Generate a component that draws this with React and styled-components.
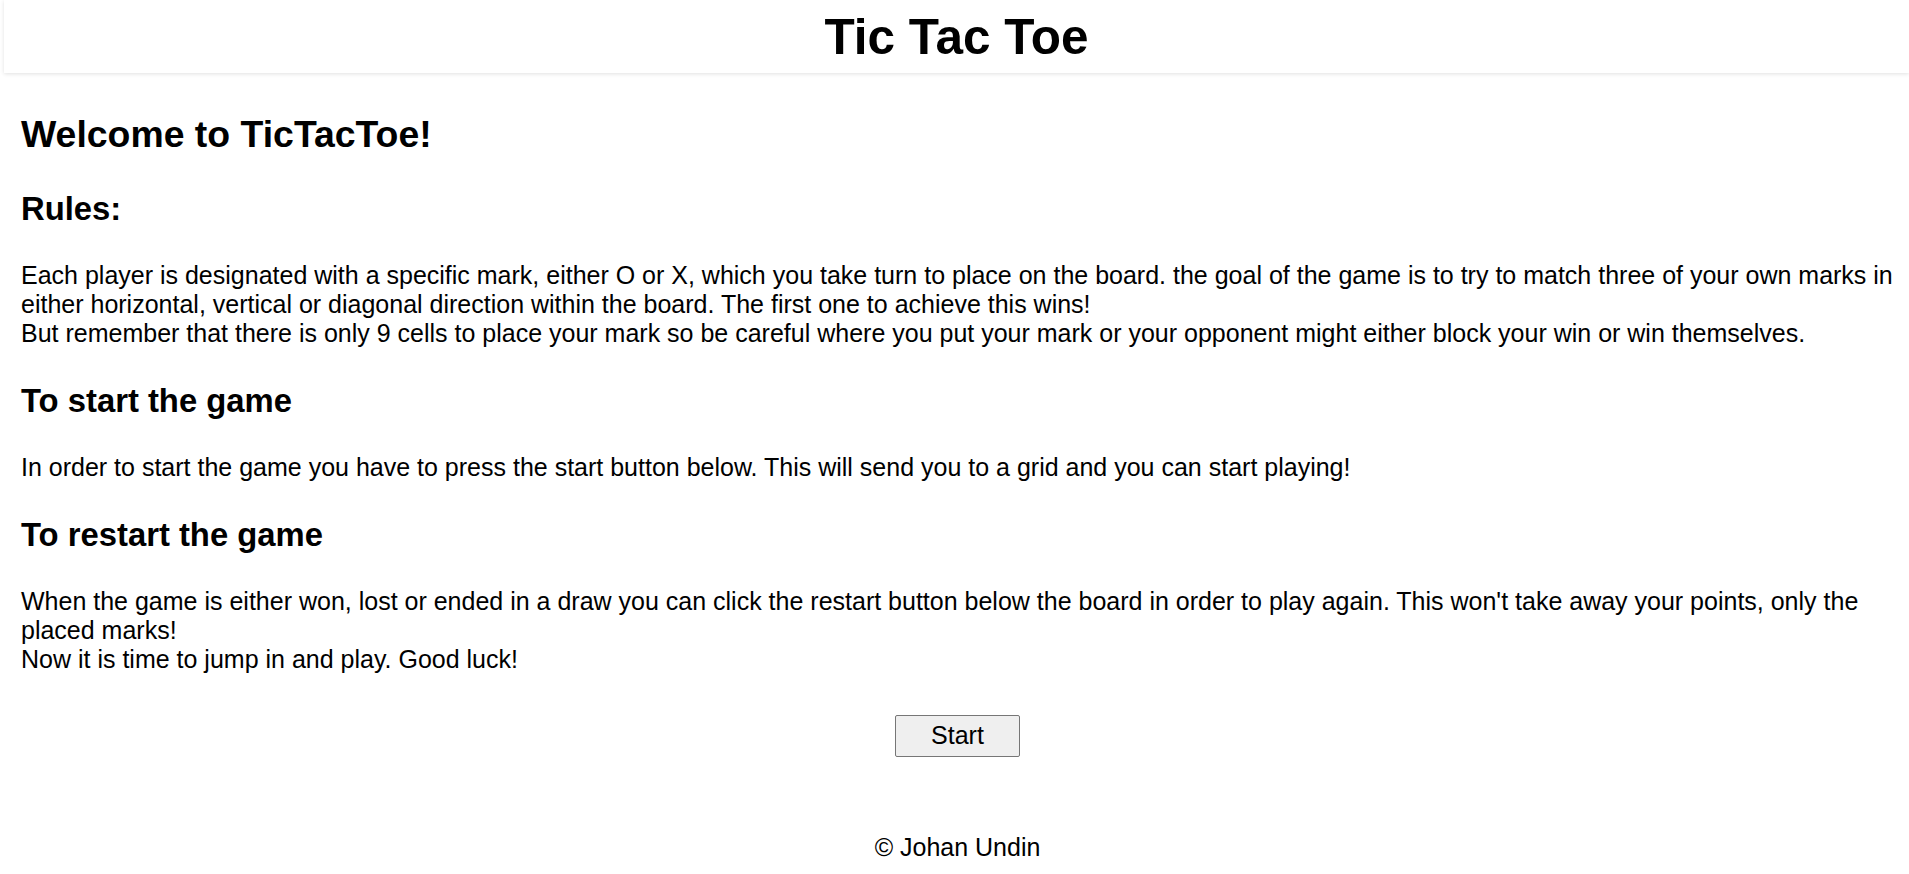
import styled, { createGlobalStyle } from 'styled-components'

const GlobalStyle = createGlobalStyle`
  html, body {
    margin: 0;
    padding: 0;
    background: #ffffff;
    color: #000000;
    font-family: "Liberation Sans", Arial, Helvetica, sans-serif;
  }
  * {
    box-sizing: border-box;
  }
`

const sections = [
  {
    title: 'Rules:',
    lines: [
      'Each player is designated with a specific mark, either O or X, which you take turn to place on the board. the goal of the game is to try to match three of your own marks in either horizontal, vertical or diagonal direction within the board. The first one to achieve this wins!',
      'But remember that there is only 9 cells to place your mark so be careful where you put your mark or your opponent might either block your win or win themselves.'
    ]
  },
  {
    title: 'To start the game',
    lines: [
      'In order to start the game you have to press the start button below. This will send you to a grid and you can start playing!'
    ]
  },
  {
    title: 'To restart the game',
    lines: [
      "When the game is either won, lost or ended in a draw you can click the restart button below the board in order to play again. This won't take away your points, only the placed marks!",
      'Now it is time to jump in and play. Good luck!'
    ]
  }
]

const App = () => {
  return (
    <Page>
      <GlobalStyle />
      <Header>
        <Title>Tic Tac Toe</Title>
      </Header>
      <Main>
        <Welcome>Welcome to TicTacToe!</Welcome>
        {sections.map(({ title, lines }) => (
          <Section key={title}>
            <SectionTitle>{title}</SectionTitle>
            <Text>
              {lines.map((line, i) => (
                <span key={i}>
                  {i > 0 && <br />}
                  {line}
                </span>
              ))}
            </Text>
          </Section>
        ))}
        <ButtonRow>
          <StartButton type="button">Start</StartButton>
        </ButtonRow>
      </Main>
      <Footer>© Johan Undin</Footer>
    </Page>
  )
}

const Page = styled.div`
  display: flex;
  flex-direction: column;
  min-height: 874px;
`

const Header = styled.header`
  height: 73px;
  margin-left: 4px;
  display: flex;
  align-items: center;
  justify-content: center;
  background: #ffffff;
  box-shadow: 0 1px 4px rgba(0, 0, 0, 0.12);
`

const Title = styled.h1`
  margin: 0;
  font-size: 49.5px;
  font-weight: 700;
`

const Main = styled.main`
  display: flex;
  flex-direction: column;
  gap: 33.5px;
  padding: 40px 15px 0 21px;
`

const Welcome = styled.h1`
  margin: 0;
  font-size: 37.4px;
  font-weight: 700;
`

const Section = styled.section`
  display: flex;
  flex-direction: column;
  gap: 33.5px;
`

const SectionTitle = styled.h2`
  margin: 0;
  font-size: 32.8px;
  font-weight: 700;
`

const Text = styled.p`
  margin: 0;
  font-size: 25px;
`

const ButtonRow = styled.div`
  display: flex;
  justify-content: center;
  margin-top: 7px;
`

const StartButton = styled.button`
  font-family: inherit;
  font-size: 25px;
  line-height: normal;
  color: #000000;
  padding: 5.5px 35.5px;
  background: #efefef;
  border: 1px solid #767676;
  border-radius: 2px;
  cursor: pointer;
`

const Footer = styled.footer`
  margin-top: 76px;
  padding-left: 6px;
  text-align: center;
  font-size: 25px;
`

export default App
